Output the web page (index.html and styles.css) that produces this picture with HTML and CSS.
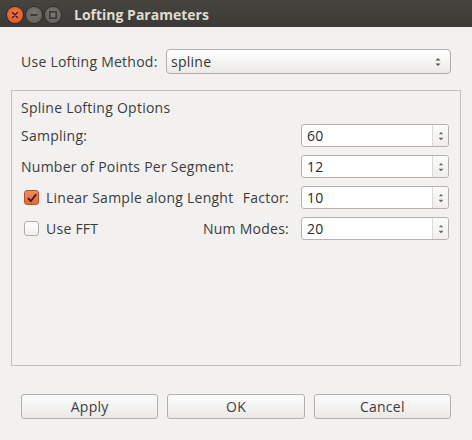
FILE: index.html
```html
<!DOCTYPE html>
<html>
<head>
<meta charset="utf-8">
<link rel="stylesheet" href="styles.css">
</head>
<body>
<div class="window">
  <div class="titlebar">
    <div class="wbtns">
      <span class="wbtn close"><svg width="16" height="16" viewBox="0 0 16 16"><path d="M5.5 5.5 L10.5 10.5 M10.5 5.5 L5.5 10.5" stroke="#3a1a10" stroke-width="1.4" stroke-linecap="round"/></svg></span>
      <span class="wbtn"><svg width="16" height="16" viewBox="0 0 16 16"><path d="M4.5 8 H11.5" stroke="#2f2e2b" stroke-width="1.6"/></svg></span>
      <span class="wbtn"><svg width="16" height="16" viewBox="0 0 16 16"><rect x="4.8" y="4.8" width="6.4" height="6.4" fill="none" stroke="#2f2e2b" stroke-width="1.3"/></svg></span>
    </div>
    <span class="title">Lofting Parameters</span>
  </div>
  <div class="content">
    <div class="method-row">
      <span class="lbl method-lbl">Use Lofting Method:</span>
      <div class="combo">
        <span class="val">spline</span>
        <svg class="updown" width="8" height="12" viewBox="0 0 8 12"><path d="M1.5 4.5 L4 2 L6.5 4.5 Z M1.5 7.5 L4 10 L6.5 7.5 Z" fill="#55524d"/></svg>
      </div>
    </div>
    <div class="group">
      <div class="group-title">Spline Lofting Options</div>
      <div class="row">
        <span class="lbl grow">Sampling:</span>
        <div class="spin"><span class="val">60</span><span class="arrows"><svg width="8" height="12" viewBox="0 0 8 12"><path d="M1.8 4.2 L4 2 L6.2 4.2 Z M1.5 7.8 L4 10.3 L6.5 7.8 Z" fill="#6a6763"/></svg></span></div>
      </div>
      <div class="row">
        <span class="lbl grow">Number of Points Per Segment:</span>
        <div class="spin"><span class="val">12</span><span class="arrows"><svg width="8" height="12" viewBox="0 0 8 12"><path d="M1.8 4.2 L4 2 L6.2 4.2 Z M1.5 7.8 L4 10.3 L6.5 7.8 Z" fill="#6a6763"/></svg></span></div>
      </div>
      <div class="row">
        <label class="check grow"><span class="box checked"><svg width="14" height="14" viewBox="0 0 14 14"><path d="M3 7.2 L5.8 10.2 L11.2 3.2" fill="none" stroke="#3b1a0c" stroke-width="1.8"/></svg></span><span class="lbl">Linear Sample along Lenght</span></label>
        <span class="lbl side">Factor:</span>
        <div class="spin"><span class="val">10</span><span class="arrows"><svg width="8" height="12" viewBox="0 0 8 12"><path d="M1.8 4.2 L4 2 L6.2 4.2 Z M1.5 7.8 L4 10.3 L6.5 7.8 Z" fill="#6a6763"/></svg></span></div>
      </div>
      <div class="row">
        <label class="check grow"><span class="box"></span><span class="lbl">Use FFT</span></label>
        <span class="lbl side">Num Modes:</span>
        <div class="spin"><span class="val">20</span><span class="arrows"><svg width="8" height="12" viewBox="0 0 8 12"><path d="M1.8 4.2 L4 2 L6.2 4.2 Z M1.5 7.8 L4 10.3 L6.5 7.8 Z" fill="#6a6763"/></svg></span></div>
      </div>
    </div>
    <div class="buttons">
      <button class="btn">Apply</button>
      <button class="btn">OK</button>
      <button class="btn">Cancel</button>
    </div>
  </div>
</div>
</body>
</html>
```
FILE: styles.css
```css
html, body {
  margin: 0;
  padding: 0;
  background: #f2f1f0;
}
.window {
  width: 472px;
  height: 440px;
  display: flex;
  flex-direction: column;
  font-family: "Open Sans", "DejaVu Sans", sans-serif;
  font-size: 14px;
  letter-spacing: 0.25px;
  color: #3c3c3c;
}
.titlebar {
  height: 27px;
  flex: none;
  background: linear-gradient(#45443f, #3b3a36);
  display: flex;
  align-items: center;
  letter-spacing: 0;
}
.wbtns {
  display: flex;
  gap: 3px;
  margin-left: 7px;
  margin-top: 2px;
}
.wbtn {
  width: 16px;
  height: 16px;
  border-radius: 50%;
  background: radial-gradient(circle at 50% 40%, #7a7873, #5c5a56);
  box-shadow: 0 0 0 1px #2d2c29;
  display: flex;
}
.wbtn.close {
  background: radial-gradient(circle at 50% 40%, #f47a50, #e04c1d);
}
.title {
  margin-left: 13px;
  margin-top: 1px;
  font-weight: bold;
  font-size: 14px;
  color: #dfdbd2;
}
.content {
  flex: 1;
  display: flex;
  flex-direction: column;
  padding: 0 11px;
}
.method-row {
  display: flex;
  align-items: center;
  margin: 22px 10px 0;
  height: 25px;
}
.method-lbl {
  width: 145px;
}
.combo {
  flex: 1;
  height: 23px;
  border: 1px solid #b2afaa;
  border-radius: 4px;
  background: linear-gradient(#ffffff, #f4f3f2 60%, #ebe9e7);
  display: flex;
  align-items: center;
  padding: 0 8px 0 4px;
}
.combo .val {
  flex: 1;
  color: #333;
}
.group {
  margin-top: 16px;
  height: 266px;
  border: 1px solid #c5c2be;
  padding: 8px 11px 0 9px;
  display: flex;
  flex-direction: column;
  gap: 8px;
}
.group-title {
  height: 18px;
  line-height: 18px;
  margin-bottom: -1px;
}
.row {
  display: flex;
  align-items: center;
  height: 23px;
}
.grow {
  flex: 1;
}
.side {
  margin-right: 12px;
}
.check {
  display: flex;
  align-items: center;
}
.box {
  width: 13px;
  height: 13px;
  margin-left: 3px;
  margin-right: 7px;
  border: 1px solid #b0ada8;
  border-radius: 3px;
  background: linear-gradient(#ffffff, #f1f0ef);
  display: flex;
  align-items: center;
  justify-content: center;
}
.box.checked {
  background: linear-gradient(#f18a5e, #e5683a);
  border-color: #b8532c;
}
.box svg {
  flex: none;
}
.spin {
  width: 146px;
  height: 21px;
  border: 1px solid #b6b3ae;
  border-radius: 3px;
  background: #ffffff;
  display: flex;
  align-items: stretch;
}
.spin .val {
  flex: 1;
  padding-left: 5px;
  display: flex;
  align-items: center;
  color: #2a2a2a;
}
.spin .arrows {
  width: 15px;
  border-left: 1px solid #dcdad7;
  background: linear-gradient(#fbfbfa, #efeeed);
  border-radius: 0 3px 3px 0;
  display: flex;
  align-items: center;
  justify-content: center;
}
.buttons {
  margin: 28px 10px 0;
  display: flex;
  gap: 9px;
}
.btn {
  flex: 1;
  height: 25px;
  border: 1px solid #b5b2ad;
  border-radius: 3px;
  background: linear-gradient(#fcfcfc, #f2f1f0 60%, #e9e8e6);
  font-family: "Open Sans", "DejaVu Sans", sans-serif;
  font-size: 14px;
  letter-spacing: 0.25px;
  color: #3c3c3c;
  padding: 0;
}
```
